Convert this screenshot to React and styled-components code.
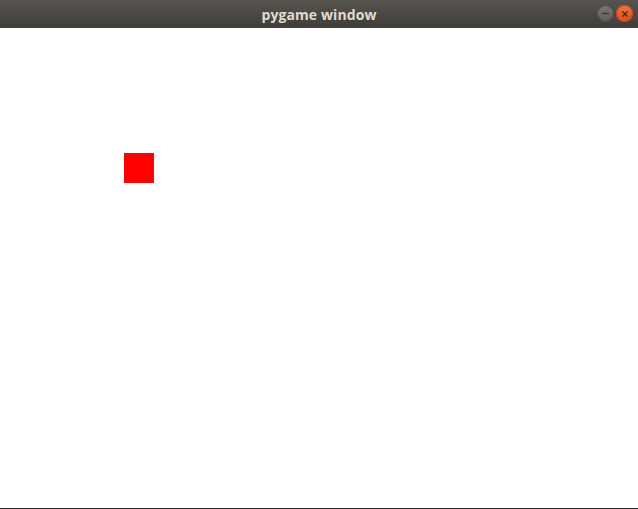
import React from "react";
import styled, { createGlobalStyle } from "styled-components";

const Global = createGlobalStyle`
  html, body { margin: 0; padding: 0; background: #ffffff; }
  body { width: 638px; height: 509px; overflow: hidden; }
`;

const Window = styled.div`
  width: 638px;
  height: 509px;
  display: flex;
  flex-direction: column;
  box-sizing: border-box;
  border-bottom: 1px solid #2c2c2c;
`;

const TitleBar = styled.div`
  height: 28px;
  flex: 0 0 28px;
  position: relative;
  display: flex;
  align-items: center;
  justify-content: center;
  background: linear-gradient(#57544f, #3e3d39);
`;

const Title = styled.span`
  font-family: "Open Sans", "DejaVu Sans", sans-serif;
  font-weight: 700;
  font-size: 14px;
  color: #dfdbd2;
  letter-spacing: 0.1px;
`;

const Controls = styled.div`
  position: absolute;
  right: 5px;
  top: 5px;
  display: flex;
  gap: 2px;
`;

const CircleButton = styled.div`
  width: 17px;
  height: 17px;
  border-radius: 50%;
  display: flex;
  align-items: center;
  justify-content: center;
  background: ${(p) => (p.$close ? "linear-gradient(#f27446, #df4a16)" : "linear-gradient(#7a7873, #5f5d59)")};
  box-shadow: inset 0 0 0 1px ${(p) => (p.$close ? "#c9441a" : "#4d4b47")};
`;

const Canvas = styled.div`
  flex: 1;
  position: relative;
  background: #ffffff;
`;

const Sprite = styled.div`
  position: absolute;
  left: ${(p) => p.$x}px;
  top: ${(p) => p.$y}px;
  width: ${(p) => p.$size}px;
  height: ${(p) => p.$size}px;
  background: #ff0000;
`;

export default function App() {
  return (
    <>
      <Global />
      <Window>
        <TitleBar>
          <Title>pygame window</Title>
          <Controls>
            <CircleButton>
              <svg width="9" height="9" viewBox="0 0 9 9">
                <line x1="1" y1="4.5" x2="8" y2="4.5" stroke="#3a3935" strokeWidth="1.4" />
              </svg>
            </CircleButton>
            <CircleButton $close>
              <svg width="8" height="8" viewBox="0 0 8 8">
                <path d="M1.5 1.5 L6.5 6.5 M6.5 1.5 L1.5 6.5" stroke="#3a2a22" strokeWidth="1.2" />
              </svg>
            </CircleButton>
          </Controls>
        </TitleBar>
        <Canvas>
          <Sprite $x={124} $y={125} $size={30} />
        </Canvas>
      </Window>
    </>
  );
}
